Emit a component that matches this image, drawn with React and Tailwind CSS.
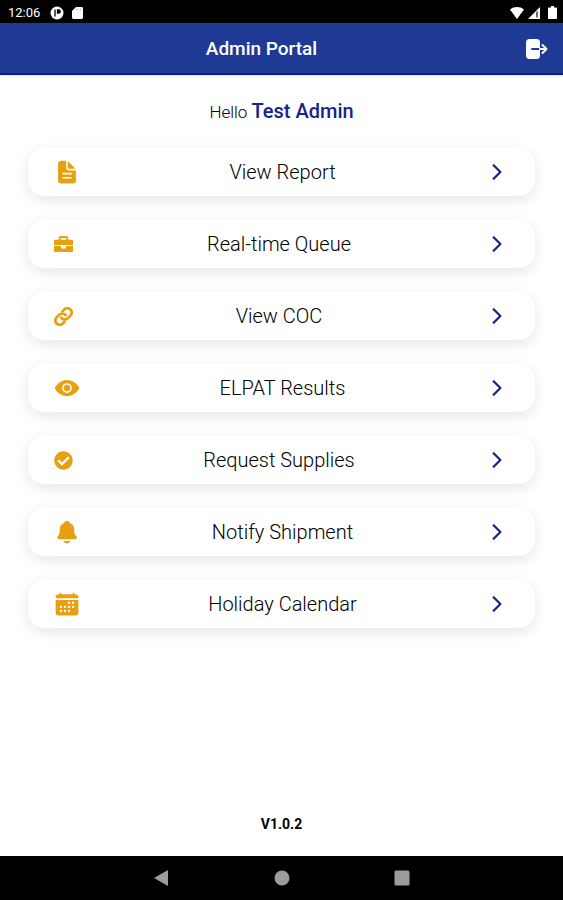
import React from 'react';
import { IoDocumentText, IoEye, IoNotifications, IoCalendar, IoChevronForward } from 'react-icons/io5';
import { FaCheckCircle } from 'react-icons/fa';

const BriefcaseIcon = ({ size }) => (
    <svg width={size} height={size} viewBox="0 0 18 18" fill="currentColor" aria-hidden="true">
        <path
            fillRule="evenodd"
            d="M4.500 4.500V3C4.500 1.800 5.200 1 6.400 1h5.200c1.200 0 1.900.8 1.900 2v1.500h3.500c.6 0 1 .4 1 1v4H0v-4c0-.6.4-1 1-1zM6.300 4.500h5.400V2.800H6.300z"
        />
        <path d="M0 10.500h6.200l.8 2.200h4l.8-2.200H18V15c0 .6-.4 1-1 1H1c-.6 0-1-.4-1-1z" />
    </svg>
);

const LinkIcon = ({ size }) => (
    <svg width={size} height={size} viewBox="1 1 22 22" fill="none" stroke="currentColor" strokeWidth="3.200" strokeLinecap="round" aria-hidden="true">
        <path d="M9.500 13.500a5 5 0 0 0 7.500.5l3-3a5 5 0 0 0-7.100-7.100l-2 2" />
        <path d="M14.500 10.500a5 5 0 0 0-7.500-.5l-3 3a5 5 0 0 0 7.100 7.100l2-2" />
    </svg>
);

const LogoutIcon = () => (
    <svg width="24" height="22" viewBox="0 0 24 22" fill="none" aria-hidden="true">
        <rect x="2" y="1" width="14" height="20" rx="3.500" fill="white" />
        <path d="M8 11h8" stroke="#1e3a95" strokeWidth="1.800" strokeLinecap="round" />
        <path d="M16 11h6M18.500 7l4 4-4 4" stroke="white" strokeWidth="2" strokeLinecap="round" strokeLinejoin="round" />
    </svg>
);

const menuItems = [
    { label: 'View Report', icon: IoDocumentText, size: 26 },
    { label: 'Real-time Queue', icon: BriefcaseIcon, size: 19 },
    { label: 'View COC', icon: LinkIcon, size: 19 },
    { label: 'ELPAT Results', icon: IoEye, size: 26 },
    { label: 'Request Supplies', icon: FaCheckCircle, size: 19 },
    { label: 'Notify Shipment', icon: IoNotifications, size: 26 },
    { label: 'Holiday Calendar', icon: IoCalendar, size: 26 },
];

const StatusBar = () => (
    <div className="flex h-[23px] shrink-0 items-center justify-between bg-black pt-0.5 pr-1.5 pl-2 text-white">
        <div className="flex items-center gap-2.5">
            <span className="text-[13px] leading-4">12:06</span>
            <div className="flex items-center gap-2">
                <svg width="14" height="14" viewBox="0 0 14 14" aria-hidden="true">
                    <circle cx="7" cy="7" r="6.500" fill="white" />
                    <path d="M5 3.500v7M7.500 4h1.200a1.500 1.500 0 0 1 0 3H7.500z" fill="black" stroke="black" strokeWidth="1.300" />
                </svg>
                <svg width="11" height="12" viewBox="0 0 11 12" aria-hidden="true">
                    <path d="M4 0h5.500C10.400 0 11 .6 11 1.500v9c0 .9-.6 1.500-1.500 1.500h-8C.6 12 0 11.400 0 10.500V4z" fill="white" />
                    <path d="M4.500 1.800v1.500M6.500 1.800v1.500M8.500 1.800v1.500" stroke="#bbb" strokeWidth="1" />
                </svg>
            </div>
        </div>
        <div className="flex items-center gap-1">
            <svg width="14" height="12" viewBox="0 0 14 12" aria-hidden="true">
                <path d="M0 2.500C4 -.8 10 -.8 14 2.500L7 12z" fill="white" />
            </svg>
            <svg width="12" height="12" viewBox="0 0 12 12" aria-hidden="true">
                <path d="M12 0v12H0z" fill="white" />
                <path d="M9 4.500v6" stroke="#444" strokeWidth="1.500" />
            </svg>
            <svg className="ml-1" width="9" height="13" viewBox="0 0 9 13" aria-hidden="true">
                <path d="M3 0h3v1.500h2c.6 0 1 .4 1 1V12c0 .6-.4 1-1 1H1c-.6 0-1-.4-1-1V2.500c0-.6.400-1 1-1h2z" fill="white" />
            </svg>
        </div>
    </div>
);

const NavigationBar = () => (
    <nav className="flex h-11 shrink-0 items-center justify-center gap-24 bg-black text-[#9c9c9c]">
        <button aria-label="Back" className="flex w-6 justify-center">
            <svg width="16" height="16" viewBox="0 0 16 16" fill="currentColor"><path d="M14 0v16L0 8z" /></svg>
        </button>
        <button aria-label="Home" className="flex w-6 justify-center">
            <svg width="16" height="16" viewBox="0 0 16 16" fill="currentColor"><circle cx="8" cy="8" r="7.500" /></svg>
        </button>
        <button aria-label="Recent apps" className="flex w-6 justify-center">
            <svg width="16" height="16" viewBox="0 0 16 16" fill="currentColor"><rect x="0.500" y="0.500" width="15" height="15" rx="1.500" /></svg>
        </button>
    </nav>
);

const App = () => {
    return (
        <div className="flex min-h-screen flex-col bg-white font-['Roboto',sans-serif]">
            <StatusBar />

            {/* HEADER */}
            <header className="flex h-[52px] shrink-0 items-center justify-between border-b-2 border-[#0a1f8a] bg-[#1e3a95] px-[15px] pt-0.5 shadow-sm">
                <div className="w-6" />
                <h1 className="pr-10 text-[19px] leading-6 font-medium text-white">Admin Portal</h1>
                <button aria-label="Log out">
                    <LogoutIcon />
                </button>
            </header>

            {/* MENU */}
            <main className="flex flex-1 flex-col px-7 pt-6">
                <p className="text-center text-[17px] leading-6 font-light text-black">
                    Hello <span className="text-xl leading-6 font-medium text-[#14248a]">Test Admin</span>
                </p>
                <div className="mt-6 flex flex-col gap-6">
                    {menuItems.map((item) => {
                        const Icon = item.icon;
                        return (
                            <button
                                key={item.label}
                                className="flex h-12 w-full items-center justify-between rounded-2xl bg-white px-[26px] shadow-[0_4px_14px_rgba(0,0,0,0.1)]"
                            >
                                <span className="text-[#e8a010]"><Icon size={item.size} /></span>
                                <span className="text-xl font-light text-black">{item.label}</span>
                                <IoChevronForward size={24} className="text-[#14248a]" />
                            </button>
                        );
                    })}
                </div>
                <p className="mt-auto pb-[22px] text-center text-sm font-bold text-black">V1.0.2</p>
            </main>

            <NavigationBar />
        </div>
    );
};

export default App;
